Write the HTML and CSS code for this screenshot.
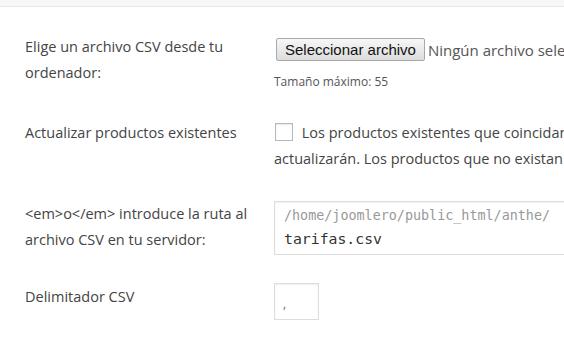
FILE: index.html
```html
<!DOCTYPE html>
<html lang="es">
<head>
  <meta charset="UTF-8" />
  <title>Importar productos CSV</title>
  <link rel="stylesheet" href="styles.css">
</head>
<body>
  <div class="strip"></div>
  <form class="import-form">
    <div class="row row-file">
      <label class="row-label" for="csvFile">Elige un archivo CSV desde tu ordenador:</label>
      <div class="row-field">
        <div class="file-line">
          <button type="button" class="file-btn">Seleccionar archivo</button>
          <span class="file-name">Ningún archivo seleccionado</span>
        </div>
        <small class="hint">Tamaño máximo: 55</small>
      </div>
    </div>

    <div class="row row-update">
      <label class="row-label" for="updateExisting">Actualizar productos existentes</label>
      <div class="row-field desc">
        <span class="check"></span> Los productos existentes que coincidan por SKU se<br>actualizarán. Los productos que no existan serán omitidos.
      </div>
    </div>

    <div class="row row-path">
      <label class="row-label" for="filePath">&lt;em&gt;o&lt;/em&gt; introduce la ruta al archivo CSV en tu servidor:</label>
      <div class="row-field">
        <div class="path-box">
          <code class="path-prefix">/home/joomlero/public_html/anthe/</code>
          <span class="path-value">tarifas.csv</span>
        </div>
      </div>
    </div>

    <div class="row row-delim">
      <label class="row-label" for="delimiter">Delimitador CSV</label>
      <div class="row-field">
        <div class="delim-box">,</div>
      </div>
    </div>
  </form>
</body>
</html>
```

FILE: styles.css
```css
html, body { margin: 0; padding: 0; overflow: hidden; }
body { background: #fff; font-family: "Open Sans", sans-serif; color: #444; font-size: 14.5px; width: 564px; }
.strip { height: 6px; background: #f7f7f7; border-bottom: 1px solid #e6e6e6; }
.import-form { border-bottom: 1px solid #e6e6e6; padding: 27px 0 29px 25px; }
.row { display: grid; grid-template-columns: 249px 600px; }
.row + .row { margin-top: 29px; }
.row-label { line-height: 26px; padding-right: 20px; }
.row-field { white-space: nowrap; }
.file-line { display: flex; align-items: center; margin-top: 4px; }
.file-btn { font-family: "Liberation Sans", Arial, sans-serif; font-size: 15px; color: #111; height: 23px; padding: 0 8px; background: linear-gradient(#f7f7f7, #dddddd); border: 1px solid #a8a8a8; border-radius: 2px; margin-left: 2px; }
.file-name { margin-left: 3px; font-size: 15px; color: #555; }
.hint { display: block; font-size: 12px; line-height: 18px; margin-top: 12px; color: #555; }
.desc { line-height: 26px; }
.check { display: inline-block; width: 16px; height: 16px; border: 1px solid #b4b9be; box-shadow: inset 0 1px 2px rgba(0,0,0,.1); vertical-align: -3px; margin-right: 5px; margin-left: 1px; background: #fff; }
.path-box { border: 1px solid #ddd; box-shadow: inset 0 1px 2px rgba(0,0,0,.07); height: 52px; padding: 0 9px; display: flex; flex-direction: column; justify-content: center; }
.path-prefix { font-family: "DejaVu Sans Mono", monospace; font-size: 13.4px; color: #999; line-height: 22px; }
.path-value { font-family: "DejaVu Sans Mono", monospace; font-size: 14.8px; color: #333; line-height: 24px; }
.delim-box { width: 45px; height: 37px; border: 1px solid #ddd; box-shadow: inset 0 1px 2px rgba(0,0,0,.07); margin-top: -1px; padding-left: 8px; box-sizing: border-box; font-size: 12px; line-height: 40px; color: #666; }
```
